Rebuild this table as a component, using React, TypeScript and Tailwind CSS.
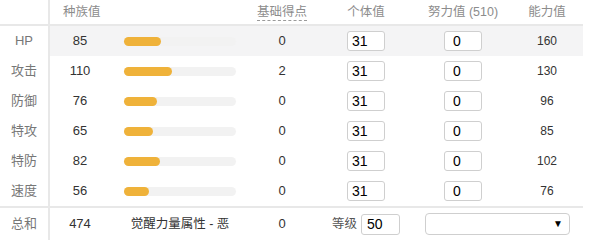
import React from "react";

const stats = [
  { name: "HP", base: 85, ev: 0, total: 160 },
  { name: "攻击", base: 110, ev: 2, total: 130 },
  { name: "防御", base: 76, ev: 0, total: 96 },
  { name: "特攻", base: 65, ev: 0, total: 85 },
  { name: "特防", base: 82, ev: 0, total: 102 },
  { name: "速度", base: 56, ev: 0, total: 76 },
];

const font = { fontFamily: '"Liberation Sans", "Noto Sans CJK SC", sans-serif' };

export default function App() {
  return (
    <div className="w-[600px] h-[240px] bg-white overflow-hidden text-[13px]" style={font}>
      <div className="w-[583px]">
        {/* header */}
        <div className="flex h-[26px] items-center border-b-2 border-[#e8e8e8] text-[#8c8c8c] text-[12.5px]">
          <div className="w-[50px] h-full border-r-2 border-[#e8e8e8]" />
          <div className="w-[200px] pl-[13px]">种族值</div>
          <div className="w-[64px] flex justify-center">
            <span className="border-b border-dashed border-[#9a9a9a] leading-[16px]">基础得点</span>
          </div>
          <div className="w-[104px] text-center">个体值</div>
          <div className="w-[90px] text-center">努力值 (510)</div>
          <div className="w-[75px] text-center pl-[3px]">能力值</div>
        </div>
        {stats.map((s, i) => (
          <div key={s.name} className={`flex h-[30px] items-center ${i === 0 ? "bg-[#f4f4f5]" : ""}`}>
            <div className="w-[50px] h-full flex items-center justify-center border-r-2 border-[#e8e8e8] bg-white text-[#777]">
              {s.name}
            </div>
            <div className="w-[60px] text-center text-[#333]">{s.base}</div>
            <div className="w-[140px] pl-[14px]">
              <div className="w-[112px] h-[9px] rounded-full bg-[#f2f2f2]">
                <div
                  className="h-full rounded-full bg-[#efb23a]"
                  style={{ width: `${Math.round((s.base / 255) * 112)}px` }}
                />
              </div>
            </div>
            <div className="w-[64px] text-center text-[#333]">{s.ev}</div>
            <div className="w-[104px] flex justify-center">
              <input
                readOnly
                value="31"
                className="w-[38px] h-[20px] border border-[#cfcfcf] rounded-[3px] bg-white pl-[4px] text-[14px] text-black outline-none"
                style={font}
              />
            </div>
            <div className="w-[90px] flex justify-center">
              <input
                readOnly
                value="0"
                className="w-[38px] h-[20px] border border-[#cfcfcf] rounded-[3px] bg-white pl-[8px] text-[14px] text-black outline-none"
                style={font}
              />
            </div>
            <div className="w-[75px] text-center pl-[3px] text-[#333] text-[12px]">{s.total}</div>
          </div>
        ))}
        <div className="flex h-[34px] items-center border-t-2 border-[#e8e8e8]">
          <div className="w-[50px] h-full flex items-center justify-center border-r-2 border-[#e8e8e8] text-[#777]">
            总和
          </div>
          <div className="w-[60px] text-center text-[#333]">474</div>
          <div className="w-[140px] text-center text-[#333] text-[12.5px]">觉醒力量属性 - 恶</div>
          <div className="w-[64px] text-center text-[#333]">0</div>
          <div className="w-[104px] flex justify-center items-center gap-[4px]">
            <span className="text-[#555] text-[12.5px]">等级</span>
            <input
              readOnly
              value="50"
              className="w-[39px] h-[21px] border border-[#cfcfcf] rounded-[3px] bg-white pl-[5px] text-[14px] text-black outline-none"
              style={font}
            />
          </div>
          <div className="w-[165px] flex justify-start pl-[7px]">
            <div className="w-[145px] h-[22px] border border-[#cfcfcf] rounded-[4px] bg-white flex items-center justify-end pr-[6px]">
              <span className="text-[10px] leading-none text-black">▼</span>
            </div>
          </div>
        </div>
      </div>
    </div>
  );
}
